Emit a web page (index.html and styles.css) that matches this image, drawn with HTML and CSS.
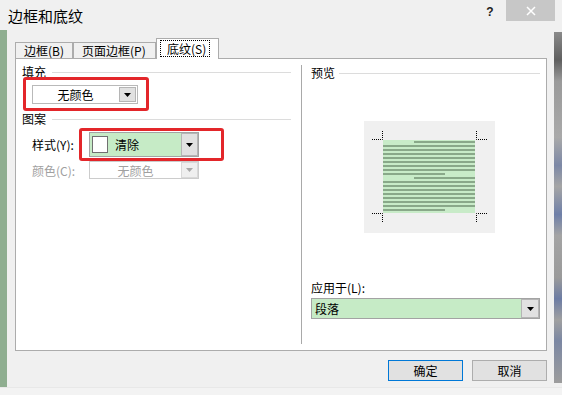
FILE: index.html
```html
<!DOCTYPE html>
<html lang="zh-CN">
<head>
<meta charset="utf-8">
<title>边框和底纹</title>
<link rel="stylesheet" href="styles.css">
</head>
<body>
<div class="titlebar">
  <div class="title">边框和底纹</div>
  <div class="help">?</div>
  <div class="close">
    <svg width="12" height="12" viewBox="0 0 12 12"><path d="M2 2 L10 10 M10 2 L2 10" stroke="#fff" stroke-width="1.5"/></svg>
  </div>
</div>
<div class="window">
  <div class="strip-left"></div>
  <div class="content">
    <div class="tabs">
      <div class="tab tab1">边框(B)</div>
      <div class="tab tab2">页面边框(P)</div>
      <div class="tab tab3 active"><span class="focus">底纹(S)</span></div>
    </div>
    <div class="panel">
      <div class="left">
        <div class="group-head"><span>填充</span><span class="rule"></span></div>
        <div class="combo fill-combo">
          <div class="value center">无颜色</div>
          <div class="btn"><svg width="7" height="4" viewBox="0 0 7 4"><polygon points="0,0 7,0 3.5,4" fill="#000"/></svg></div>
        </div>
        <div class="group-head head2"><span>图案</span><span class="rule"></span></div>
        <div class="row style-row">
          <div class="row-label">样式(Y):</div>
          <div class="combo green style-combo">
            <div class="value"><span class="swatch"></span><span>清除</span></div>
            <div class="btn"><svg width="7" height="4" viewBox="0 0 7 4"><polygon points="0,0 7,0 3.5,4" fill="#000"/></svg></div>
          </div>
        </div>
        <div class="row color-row">
          <div class="row-label disabled">颜色(C):</div>
          <div class="combo disabled-combo">
            <div class="value center">无颜色</div>
            <div class="btn"><svg width="7" height="4" viewBox="0 0 7 4"><polygon points="0,0 7,0 3.5,4" fill="#a8a8a8"/></svg></div>
          </div>
        </div>
      </div>
      <div class="divider"></div>
      <div class="right">
        <div class="group-head"><span>预览</span><span class="rule"></span></div>
        <div class="preview">
          <svg width="131" height="112" viewBox="0 0 131 112">
            <rect x="19" y="19" width="92" height="73" fill="#c8ebc8"/>
            <g fill="#89a889">
              <rect x="50" y="20" width="61" height="2"/>
              <rect x="19" y="24" width="92" height="2"/>
              <rect x="19" y="28" width="92" height="2"/>
              <rect x="19" y="32" width="92" height="2"/>
              <rect x="19" y="36" width="92" height="2"/>
              <rect x="19" y="40" width="92" height="2"/>
              <rect x="19" y="44" width="92" height="2"/>
              <rect x="19" y="48" width="92" height="2"/>
              <rect x="19" y="52" width="62" height="2"/>
              <rect x="50" y="56" width="61" height="2"/>
              <rect x="19" y="60" width="92" height="2"/>
              <rect x="19" y="64" width="92" height="2"/>
              <rect x="19" y="68" width="92" height="2"/>
              <rect x="19" y="72" width="92" height="2"/>
              <rect x="19" y="76" width="92" height="2"/>
              <rect x="19" y="80" width="92" height="2"/>
              <rect x="19" y="84" width="92" height="2"/>
              <rect x="19" y="88" width="62" height="2"/>
            </g>
            <g stroke="#000" stroke-width="1" stroke-dasharray="1 1" fill="none">
              <path d="M8 18.5 H18.5 V9"/>
              <path d="M123 18.5 H112.5 V9"/>
              <path d="M8 92.5 H18.5 V102"/>
              <path d="M123 92.5 H112.5 V102"/>
            </g>
          </svg>
        </div>
        <div class="apply-label">应用于(L):</div>
        <div class="combo green apply-combo">
          <div class="value">段落</div>
          <div class="btn"><svg width="7" height="4" viewBox="0 0 7 4"><polygon points="0,0 7,0 3.5,4" fill="#000"/></svg></div>
        </div>
      </div>
    </div>
    <div class="buttons">
      <div class="button default">确定</div>
      <div class="button">取消</div>
    </div>
  </div>
  <div class="strip-right"></div>
</div>
<div class="bottom"></div>
<div class="mark mark1"></div>
<div class="mark mark2"></div>
</body>
</html>
```
FILE: styles.css
```css
* { box-sizing: border-box; }
html, body { margin: 0; padding: 0; }
body {
  width: 562px;
  height: 395px;
  overflow: hidden;
  position: relative;
  background: #f0f0f0;
  font-family: "Noto Sans CJK SC", "Microsoft YaHei", sans-serif;
  font-size: 12px;
  color: #000;
}
.titlebar {
  height: 30px;
  display: flex;
  align-items: flex-start;
}
.title {
  padding-left: 8px;
  font-size: 15px;
  line-height: 30px;
  padding-top: 1px;
}
.help {
  margin-left: auto;
  width: 16px;
  text-align: center;
  font-family: "Liberation Sans", sans-serif;
  font-weight: bold;
  font-size: 12px;
  line-height: 24px;
  color: #222;
}
.close {
  width: 49px;
  height: 21px;
  margin-left: 8px;
  margin-right: 7px;
  background: #c7c7c7;
  display: flex;
  align-items: center;
  justify-content: center;
}
.window {
  height: 357px;
  display: flex;
}
.strip-left {
  width: 7px;
  background: #8fae90;
}
.strip-right {
  width: 8px;
  margin-top: 2px;
  margin-bottom: 4px;
  background: linear-gradient(to bottom, #8a8a8a 0%, #5f5f5f 8%, #9a9a9a 14%, #a9a9a9 30%, #7c88a6 38%, #a5a5a5 44%, #6e7fa8 52%, #a4a4a4 58%, #9a9a9a 70%, #6c7ca4 76%, #a0a0a0 82%, #7b87a3 88%, #9d9d9d 100%);
}
.content {
  flex: 1;
  padding: 8px 0 0 8px;
}
.tabs {
  display: flex;
  align-items: flex-end;
  height: 21px;
  margin-bottom: -1px;
  position: relative;
  z-index: 1;
}
.tab {
  height: 17px;
  border: 1px solid #acacac;
  background: #f0f0f0;
  line-height: 15px;
  padding-left: 8px;
  white-space: nowrap;
}
.tab1 { width: 58px; }
.tab2 { width: 83px; }
.tab3 {
  width: 63px;
  height: 21px;
  background: #fff;
  border-bottom: none;
  padding-left: 3px;
  padding-top: 1px;
}
.focus {
  display: inline-block;
  border: 1px dotted #000;
  padding: 0 3px 0 6px;
  line-height: 15px;
  height: 17px;
}
.panel {
  width: 532px;
  height: 293px;
  border: 1px solid #acacac;
  background: #fff;
  display: flex;
}
.left {
  width: 285px;
  padding: 5px 10px 0 6px;
}
.divider {
  width: 1px;
  background: #a9a9a9;
  margin: 6px 0;
}
.right {
  flex: 1;
  padding: 6px 6px 0 9px;
}
.group-head {
  display: flex;
  align-items: center;
  height: 16px;
  line-height: 16px;
}
.rule {
  flex: 1;
  border-top: 1px solid #dcdcdc;
  margin-left: 6px;
}
.right .rule { margin-left: 4px; }
.combo {
  display: flex;
  border: 1px solid #b9b9b9;
  background: #fff;
}
.combo .value {
  flex: 1;
  display: flex;
  align-items: center;
  padding-left: 3px;
  white-space: nowrap;
}
.combo .value.center { justify-content: center; padding-left: 0; }
.combo .btn {
  width: 17px;
  background: #e1e1e1;
  border: 1px solid #b5b5b5;
  margin: 0;
  display: flex;
  align-items: center;
  justify-content: center;
}
.fill-combo {
  margin-top: 5px;
  margin-left: 10px;
  width: 106px;
  height: 19px;
}
.fill-combo .btn { margin: 1px; }
.head2 { margin-top: 7px; }
.row {
  display: flex;
  align-items: center;
  padding-left: 10px;
}
.row-label { width: 57px; white-space: nowrap; }
.disabled { color: #a0a0a0; }
.style-row { margin-top: 5px; }
.green { background: #c6ebc6; border-color: #a3a3a3; }
.style-combo {
  width: 110px;
  height: 25px;
}
.style-combo .value { padding-left: 2px; }
.swatch {
  width: 16px;
  height: 17px;
  border: 1px solid #707070;
  background: #fff;
  margin-right: 7px;
}
.color-row { margin-top: 4px; }
.disabled-combo {
  width: 110px;
  height: 18px;
  border-color: #cccccc;
  color: #a0a0a0;
}
.disabled-combo .btn { background: #efefef; border-color: #d9d9d9; }
.preview {
  margin-top: 40px;
  margin-left: 53px;
  width: 131px;
  height: 112px;
  background: #f0f0f0;
}
.preview svg { display: block; }
.apply-label {
  margin-top: 47px;
  height: 16px;
  line-height: 16px;
}
.apply-combo {
  margin-top: 2px;
  width: 229px;
  height: 21px;
}
.apply-combo .btn { width: 18px; }
.buttons {
  display: flex;
  justify-content: flex-end;
  gap: 9px;
  margin-top: 9px;
  padding-right: 7px;
}
.button {
  width: 75px;
  height: 21px;
  background: #e1e1e1;
  border: 1px solid #adadad;
  text-align: center;
  line-height: 19px;
}
.button.default { border-color: #0078d7; }
.bottom {
  height: 8px;
  background: #f3f3f3;
  border-top: 1px solid #e8e8e8;
}
.mark {
  position: absolute;
  border: 3px solid #e3262a;
  border-radius: 3px;
}
.mark1 { left: 23px; top: 77px; width: 126px; height: 34px; }
.mark2 { left: 79px; top: 128px; width: 145px; height: 33px; }
```
